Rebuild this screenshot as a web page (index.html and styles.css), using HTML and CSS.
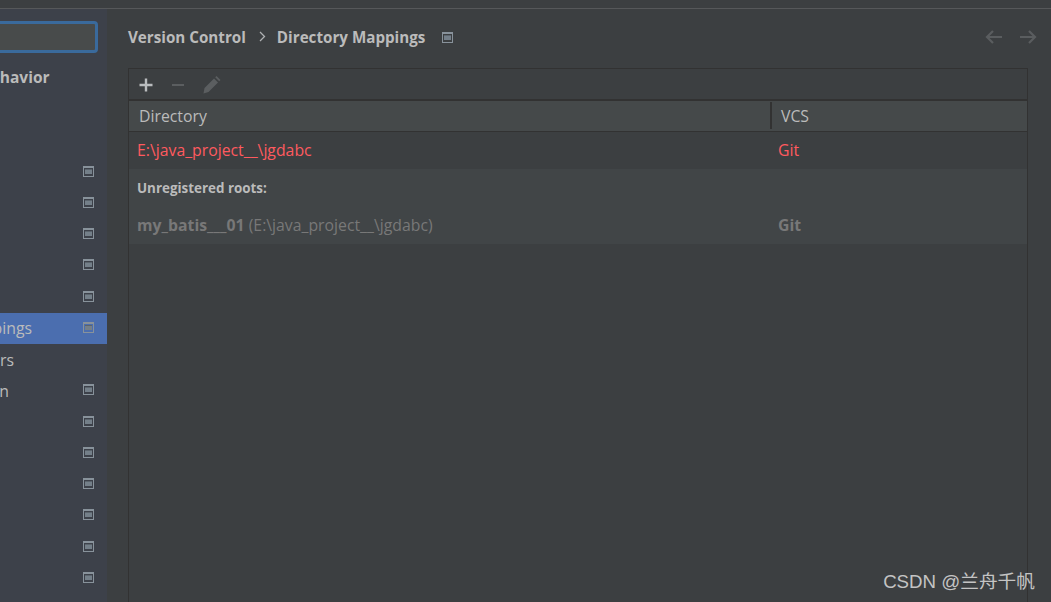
FILE: index.html
```html
<!DOCTYPE html>
<html lang="en">
<head>
<meta charset="utf-8">
<title>Directory Mappings</title>
<link rel="stylesheet" href="styles.css">
</head>
<body>
<svg class="defs" width="0" height="0" aria-hidden="true">
  <symbol id="proj" viewBox="0 0 11 11">
    <rect x="0.5" y="0.5" width="10" height="10" fill="none" stroke="#88929b"/>
    <rect x="1" y="1" width="9" height="1" fill="#88929b"/>
    <rect x="2" y="3" width="7" height="5" fill="#747f89"/>
    <rect x="2" y="3" width="7" height="1" fill="#5b646d"/>
  </symbol>
</svg>
<div class="topbar"></div>
<div class="layout">
  <aside class="sidebar">
    <div class="sidebar-inner">
      <div class="search"></div>
      <div class="heading">Appearance &amp; Behavior</div>
      <ul class="tree">
        <li class="row empty"></li>
        <li class="row empty"></li>
        <li class="row"><span></span><svg class="proj"><use href="#proj"/></svg></li>
        <li class="row"><span></span><svg class="proj"><use href="#proj"/></svg></li>
        <li class="row"><span></span><svg class="proj"><use href="#proj"/></svg></li>
        <li class="row"><span></span><svg class="proj"><use href="#proj"/></svg></li>
        <li class="row"><span></span><svg class="proj"><use href="#proj"/></svg></li>
        <li class="row selected"><span>Directory Mappings</span><svg class="proj"><use href="#proj"/></svg></li>
        <li class="row"><span>File Status Colors</span></li>
        <li class="row"><span>Issue Navigation</span><svg class="proj"><use href="#proj"/></svg></li>
        <li class="row"><span></span><svg class="proj"><use href="#proj"/></svg></li>
        <li class="row"><span></span><svg class="proj"><use href="#proj"/></svg></li>
        <li class="row"><span></span><svg class="proj"><use href="#proj"/></svg></li>
        <li class="row"><span></span><svg class="proj"><use href="#proj"/></svg></li>
        <li class="row"><span></span><svg class="proj"><use href="#proj"/></svg></li>
        <li class="row"><span></span><svg class="proj"><use href="#proj"/></svg></li>
      </ul>
    </div>
  </aside>
  <main class="main">
    <header class="crumbs">
      <span class="crumb">Version Control</span>
      <svg class="chev" width="7" height="11" viewBox="0 0 7 11"><path d="M1 1l4.500 4.500L1 10" fill="none" stroke="#afb1b3" stroke-width="1.300"/></svg>
      <span class="crumb">Directory Mappings</span>
      <svg class="proj crumb-icon"><use href="#proj"/></svg>
      <div class="nav">
        <svg width="18" height="14" viewBox="0 0 18 14"><path d="M17 7H2M8 1L2 7l6 6" fill="none" stroke="#5a5d5f" stroke-width="2.200"/></svg>
        <svg width="18" height="14" viewBox="0 0 18 14"><path d="M1 7h15M10 1l6 6-6 6" fill="none" stroke="#5a5d5f" stroke-width="2.200"/></svg>
      </div>
    </header>
    <section class="panel">
      <div class="toolbar">
        <svg width="14" height="14" viewBox="0 0 14 14"><path d="M7 0.500v13M0.500 7h13" stroke="#b9bcbe" stroke-width="2.400"/></svg>
        <svg width="14" height="14" viewBox="0 0 14 14"><path d="M1 7h12" stroke="#5b5e60" stroke-width="2"/></svg>
        <svg width="18" height="18" viewBox="0 0 18 18"><path d="M0.500 17.500l1-5.500L11 2.500l4 4-9.500 9.500zM12.200 1.300L13.500 0l4 4-1.300 1.300z" fill="#5b5e60"/></svg>
      </div>
      <div class="thead">
        <div class="th th-dir">Directory</div>
        <div class="th th-vcs">VCS</div>
      </div>
      <div class="tr tr-error">
        <div class="cell-dir">E:\java_project__\jgdabc</div>
        <div class="cell-vcs">Git</div>
      </div>
      <div class="group">
        <div class="group-title">Unregistered roots:</div>
        <div class="tr tr-root">
          <div class="cell-dir"><b>my_batis___01</b> (E:\java_project__\jgdabc)</div>
          <div class="cell-vcs"><b>Git</b></div>
        </div>
      </div>
    </section>
  </main>
</div>
<div class="watermark">CSDN @兰舟千帆</div>
</body>
</html>
```
FILE: styles.css
```css
* { box-sizing: border-box; }
html, body { margin: 0; height: 100%; }
body {
  width: 1051px;
  height: 602px;
  overflow: hidden;
  position: relative;
  background: #3c3f41;
  color: #bbbbbb;
  font-family: "Open Sans", "Noto Sans", sans-serif;
  font-size: 14px;
}
.defs { position: absolute; }
.topbar { height: 9px; background: #3c3f41; border-bottom: 1px solid #56585a; }
.layout { display: flex; height: 593px; }
.sidebar { width: 107px; flex: none; background: #3d414a; overflow: hidden; }
.sidebar-inner { width: 267px; margin-left: -160px; padding-top: 12px; }
.search {
  width: 258px;
  height: 32px;
  background: #484b4b;
  border: 3px solid #3a6a9c;
  border-radius: 4px;
}
.heading {
  height: 41px;
  padding-top: 14px;
  padding-left: 28px;
  font-weight: 700;
  font-size: 15.500px;
  line-height: 20px;
  white-space: nowrap;
}
.tree { list-style: none; margin: 0; padding: 0; }
.row {
  height: 31.250px;
  display: flex;
  align-items: center;
  justify-content: space-between;
  padding-left: 48px;
  padding-right: 13px;
  font-size: 15.800px;
}
.row span { white-space: nowrap; }
.row.selected { background: #4b6eaf; }
.proj { width: 11px; height: 11px; flex: none; }
.row .proj { margin-bottom: 2px; }
.main { flex: 1; min-width: 0; padding: 0 23px 0 21px; }
.crumbs { display: flex; align-items: center; height: 59px; padding-bottom: 4px; }
.crumb { font-weight: 700; font-size: 15.200px; }
.chev { margin: 0 11px 0 13px; }
.crumb-icon { margin-left: 17px; margin-top: 2px; }
.nav { margin-left: auto; display: flex; gap: 16px; margin-right: -9px; }
.panel { border: 1px solid #323232; height: 540px; }
.toolbar { height: 32px; display: flex; align-items: center; gap: 18px; padding-left: 10px; padding-top: 2px; border-bottom: 2px solid #323232; }
.thead { display: flex; height: 31px; background: #45494a; border-bottom: 1px solid #323232; font-size: 15.800px; }
.th { display: flex; align-items: center; padding-left: 10px; }
.th-dir { width: 642px; }
.th-vcs { flex: 1; position: relative; }
.th-vcs::before { content: ""; position: absolute; left: -1px; top: 1px; bottom: 2px; width: 2px; background: #323232; }
.tr { display: flex; align-items: center; height: 37px; font-size: 15.800px; padding-bottom: 2px; }
.cell-dir { width: 641px; padding-left: 8px; }
.cell-vcs { flex: 1; padding-left: 8px; }
.tr-error { color: #ff5a5f; }
.group { background: #414547; height: 75px; }
.group-title { height: 38px; display: flex; align-items: center; padding-left: 8px; font-weight: 700; font-size: 13.400px; }
.tr-root { color: #787878; }
.watermark {
  position: absolute;
  right: 16px;
  bottom: 9px;
  color: #c4c4c4;
  font-family: "Liberation Sans", "Noto Sans CJK SC", sans-serif;
  font-size: 18.700px;
}
```
